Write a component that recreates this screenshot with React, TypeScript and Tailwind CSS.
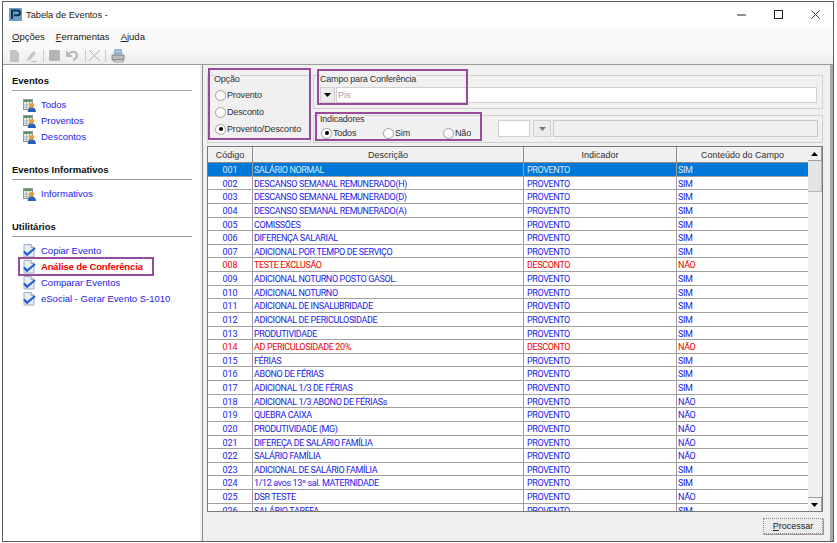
import React from "react";

const rows: [string, string, string, string][] = [
  ["001", "SALÁRIO NORMAL", "PROVENTO", "SIM"],
  ["002", "DESCANSO SEMANAL REMUNERADO(H)", "PROVENTO", "SIM"],
  ["003", "DESCANSO SEMANAL REMUNERADO(D)", "PROVENTO", "SIM"],
  ["004", "DESCANSO SEMANAL REMUNERADO(A)", "PROVENTO", "SIM"],
  ["005", "COMISSÕES", "PROVENTO", "SIM"],
  ["006", "DIFERENÇA SALARIAL", "PROVENTO", "SIM"],
  ["007", "ADICIONAL POR TEMPO DE SERVIÇO", "PROVENTO", "SIM"],
  ["008", "TESTE EXCLUSÃO", "DESCONTO", "NÃO"],
  ["009", "ADICIONAL NOTURNO POSTO GASOL.", "PROVENTO", "SIM"],
  ["010", "ADICIONAL NOTURNO", "PROVENTO", "SIM"],
  ["011", "ADICIONAL DE INSALUBRIDADE", "PROVENTO", "SIM"],
  ["012", "ADICIONAL DE PERICULOSIDADE", "PROVENTO", "SIM"],
  ["013", "PRODUTIVIDADE", "PROVENTO", "SIM"],
  ["014", "AD PERICULOSIDADE 20%", "DESCONTO", "NÃO"],
  ["015", "FÉRIAS", "PROVENTO", "SIM"],
  ["016", "ABONO DE FÉRIAS", "PROVENTO", "SIM"],
  ["017", "ADICIONAL 1/3 DE FÉRIAS", "PROVENTO", "SIM"],
  ["018", "ADICIONAL 1/3 ABONO DE FÉRIASs", "PROVENTO", "NÃO"],
  ["019", "QUEBRA CAIXA", "PROVENTO", "NÃO"],
  ["020", "PRODUTIVIDADE (MG)", "PROVENTO", "NÃO"],
  ["021", "DIFEREÇA DE SALÁRIO FAMÍLIA", "PROVENTO", "NÃO"],
  ["022", "SALÁRIO FAMÍLIA", "PROVENTO", "NÃO"],
  ["023", "ADICIONAL DE SALÁRIO FAMÍLIA", "PROVENTO", "SIM"],
  ["024", "1/12 avos 13º sal. MATERNIDADE", "PROVENTO", "SIM"],
  ["025", "DSR TESTE", "PROVENTO", "NÃO"],
  ["026", "SALÁRIO TAREFA", "PROVENTO", "SIM"],
];

function TableIcon() {
  return (
    <svg width="13" height="13" viewBox="0 0 13 13" className="shrink-0">
      <rect x="0.5" y="0.5" width="9" height="10" fill="#e8eef0" stroke="#8a9698" />
      <rect x="1" y="1" width="8" height="2" fill="#5c9a62" />
      <path d="M0 6h9M0 8.500h9M3.500 3v7M6.500 3v7" stroke="#9aa5a8" strokeWidth="0.7" />
      <circle cx="8.800" cy="6.200" r="2.300" fill="#ee9a2e" />
      <path d="M4.600 13c0-3 1.800-4.400 4.200-4.400S13 10 13 13z" fill="#2c62b8" />
    </svg>
  );
}

function CheckIcon() {
  return (
    <svg width="13" height="14" viewBox="0 0 13 14" className="shrink-0">
      <path d="M1 .5h7l3 3V13H1z" fill="#e6edf5" stroke="#9fadbd" />
      <path d="M8 .5v3h3" fill="#d5dde6" stroke="#9fadbd" />
      <path d="M1 7.500l3 3.300L12 4" fill="none" stroke="#1f5fd0" strokeWidth="2.200" />
    </svg>
  );
}

function Section({ title, children }: { title: string; children: React.ReactNode }) {
  return (
    <div>
      <div className="font-bold text-[9.5px] leading-[12px] text-[#101010] border-b border-[#a0a0a0] pb-[3px] mr-[8px]">{title}</div>
      <div className="flex flex-col pl-[11px] pt-[6px]">{children}</div>
    </div>
  );
}

function Link({ icon, label, red }: { icon: React.ReactNode; label: string; red?: boolean }) {
  return (
    <div className="h-[16px] flex items-center gap-[5px]">
      {icon}
      <span className={red ? "text-[#f00000] font-bold tracking-[-0.15px]" : "text-[#1a1aee]"}>{label}</span>
    </div>
  );
}

function Radio({ on, label, className }: { on?: boolean; label: string; className?: string }) {
  return (
    <div className={"flex items-center gap-[1px] h-[12px] text-[9px] tracking-[-0.15px] " + (className ?? "")}>
      <span className="w-[11px] h-[11px] rounded-full border border-[#a0a0a0] bg-white flex items-center justify-center shrink-0">
        {on && <span className="w-[4px] h-[4px] rounded-full bg-black" />}
      </span>
      <span className="text-[#303030]">{label}</span>
    </div>
  );
}

function GroupLabel({ text, x }: { text: string; x: string }) {
  return <span className={"absolute top-[-3px] leading-[12px] text-[9px] tracking-[-0.2px] px-[0px] bg-[#f0f0f0] text-[#303030] " + x}>{text}</span>;
}

function ArrowDown({ color = "#000" }: { color?: string }) {
  return (
    <svg width="7" height="4" viewBox="0 0 7 4">
      <path d="M0 0h7L3.500 4z" fill={color} />
    </svg>
  );
}

export default function App() {
  return (
    <div className="w-[837px] h-[543px] bg-white overflow-hidden relative text-[9.5px] leading-[12px] font-['Liberation_Sans',sans-serif]">
      <div className="ml-[2px] mt-[1px] w-[832px] h-[541px] border border-[#5a6068] flex flex-col bg-[#f0f0f0]">
        <div className="h-[25px] bg-white flex items-center shrink-0">
          <svg width="13" height="13" viewBox="0 0 13 13" className="ml-[6px] shrink-0">
            <rect width="13" height="13" fill="#6d9fc8" />
            <path d="M3 11V2.500h5.500a2.300 2.300 0 0 1 0 4.800H4.800" fill="none" stroke="#10304f" strokeWidth="2" />
          </svg>
          <span className="ml-[4px] text-[9.25px] text-[#202020]">Tabela de Eventos -</span>
          <div className="ml-auto flex items-center mr-[13px] gap-[28px]">
            <svg width="9" height="9" viewBox="0 0 9 9"><path d="M0 5h9" stroke="#222" /></svg>
            <svg width="9" height="9" viewBox="0 0 9 9"><rect x="0.500" y="0.500" width="8" height="8" fill="none" stroke="#222" /></svg>
            <svg width="9" height="9" viewBox="0 0 9 9"><path d="M0.500 0.500l8 8M8.500 0.500l-8 8" stroke="#333" /></svg>
          </div>
        </div>
        <div className="h-[20px] bg-[#f9f9f9] flex items-center pl-[9px] gap-[11px] text-[#202020] shrink-0">
          <span><u>O</u>pções</span>
          <span><u>F</u>erramentas</span>
          <span><u>A</u>juda</span>
        </div>
        <div className="h-[18px] flex items-center pl-[7px] shrink-0 border-b border-[#9a9a9a] bg-gradient-to-b from-[#fafafa] to-[#ececec]">
          <svg width="9" height="12" viewBox="0 0 9 12"><path d="M0 0h6l3 3v9H0z" fill="#c4c4c4" /></svg>
          <svg width="12" height="13" viewBox="0 0 12 13" className="ml-[7px]"><path d="M1 12c0-3 2-5 6.500-10l2.500 2c-3 4-5 7-9 8z" fill="#c6c6c6" /><path d="M5 12.500h6" stroke="#c0c0c0" /></svg>
          <span className="w-px h-[12px] bg-[#c8c8c8] ml-[5px]" />
          <svg width="11" height="11" viewBox="0 0 11 11" className="ml-[5px]"><rect width="11" height="11" rx="1.500" fill="#b4b4b4" /></svg>
          <svg width="13" height="11" viewBox="0 0 13 11" className="ml-[6px]"><path d="M1 1v5h5M2 5c3-5 9-4 9 1 0 2-2 3-4 4" fill="none" stroke="#b8b8b8" strokeWidth="2" /></svg>
          <span className="w-px h-[12px] bg-[#c8c8c8] ml-[6px]" />
          <svg width="13" height="13" viewBox="0 0 13 13" className="ml-[2px]"><path d="M1 1l11 11M12 1L1 12" stroke="#adadad" /></svg>
          <span className="w-px h-[12px] bg-[#c8c8c8] ml-[4px]" />
          <svg width="14" height="14" viewBox="0 0 14 14" className="ml-[5px]">
            <path d="M4 0h6l1 5H3z" fill="#9cc0e2" stroke="#6f8fae" strokeWidth="0.600" />
            <path d="M1 6h12v5H1z" fill="#b9bdc2" stroke="#666" strokeWidth="0.700" />
            <path d="M3 11h9v2H3z" fill="#f0f0f0" stroke="#666" strokeWidth="0.600" />
          </svg>
        </div>
        <div className="flex-1 flex min-h-0">
          <aside className="w-[197px] shrink-0 bg-white pl-[9px] pt-[10px] flex flex-col gap-[19px]">
            <Section title="Eventos">
              <Link icon={<TableIcon />} label="Todos" />
              <Link icon={<TableIcon />} label="Proventos" />
              <Link icon={<TableIcon />} label="Descontos" />
            </Section>
            <Section title="Eventos Informativos">
              <Link icon={<TableIcon />} label="Informativos" />
            </Section>
            <Section title="Utilitários">
              <Link icon={<CheckIcon />} label="Copiar Evento" />
              <Link icon={<CheckIcon />} label="Análise de Conferência" red />
              <Link icon={<CheckIcon />} label="Comparar Eventos" />
              <Link icon={<CheckIcon />} label="eSocial - Gerar Evento S-1010" />
            </Section>
          </aside>
          <main className="flex-1 min-w-0 ml-[2px] border-l border-[#8c8c8c] border-r-[3px] border-r-[#a8a8a8] pl-[4px] pr-[7px] pt-[10px] flex flex-col">
            <div className="flex gap-[2px] h-[68px] shrink-0">
              <div className="relative w-[104px] border border-[#d0d0d0] pl-[7px] pt-[13px] flex flex-col gap-[5px]">
                <GroupLabel text="Opção" x="left-[6px]" />
                <Radio label="Provento" />
                <Radio label="Desconto" />
                <Radio on label="Provento/Desconto" />
              </div>
              <div className="flex-1 flex flex-col gap-[6px]">
                <div className="relative h-[34px] border border-[#d0d0d0] pl-[6px] pr-[5px] pt-[11px] flex gap-[1px]">
                  <GroupLabel text="Campo para Conferência" x="left-[6px]" />
                  <div className="w-[15px] h-[16px] bg-[#ececec] border border-[#d0d0d0] flex items-center justify-center"><ArrowDown /></div>
                  <div className="flex-1 h-[16px] bg-white border border-[#d0d0d0] pl-[1px] text-[#a0a0b0] text-[9px] leading-[14px]">Pis</div>
                </div>
                <div className="relative h-[28px] border border-[#d0d0d0] pl-[7px] pr-[4px] flex items-start">
                  <GroupLabel text="Indicadores" x="left-[6px]" />
                  <Radio on label="Todos" className="mt-[11px] w-[62px]" />
                  <Radio label="Sim" className="mt-[11px] w-[60px]" />
                  <Radio label="Não" className="mt-[11px] w-[55px]" />
                  <div className="w-[32px] h-[17px] mt-[4px] bg-white border border-[#d0d0d0]" />
                  <div className="ml-[3px] w-[18px] h-[17px] mt-[4px] bg-[#ececec] border border-[#d0d0d0] flex items-center justify-center"><ArrowDown color="#777" /></div>
                  <div className="ml-[2px] flex-1 h-[17px] mt-[4px] border border-[#c8c8c8]" />
                </div>
              </div>
            </div>
            <div className="mt-[3px] h-[366px] shrink-0 border border-[#7a7a7a] flex overflow-hidden bg-white">
              <div className="flex-1 min-w-0 overflow-hidden">
                <div className="h-[16px] grid grid-cols-[45px_271px_153px_1fr] bg-[#f0f0f0] border-b border-[#8c8c8c] text-center text-[9px] text-[#303030] leading-[16px]">
                  <div className="border-r border-[#8c8c8c]">Código</div>
                  <div className="border-r border-[#8c8c8c]">Descrição</div>
                  <div className="border-r border-[#8c8c8c]">Indicador</div>
                  <div>Conteúdo do Campo</div>
                </div>
                {rows.map((r, i) => {
                  const sel = i === 0;
                  const red = r[2] === "DESCONTO";
                  const color = sel ? "text-[#d8e8ff] bg-[#0078d7]" : red ? "text-[#f00000]" : "text-[#1a1aee]";
                  return (
                    <div key={r[0]} className={"h-[13.625px] grid grid-cols-[45px_271px_153px_1fr] border-b border-[#a0a0a0] leading-[14px] text-[9px] tracking-[-0.37px] font-['Roboto',sans-serif] " + color}>
                      <div className="text-center border-r border-[#a0a0a0] tracking-normal">{r[0]}</div>
                      <div className="pl-[1px] border-r border-[#a0a0a0] whitespace-nowrap">{r[1]}</div>
                      <div className="pl-[3px] border-r border-[#a0a0a0]">{r[2]}</div>
                      <div className="pl-[1px]">{r[3]}</div>
                    </div>
                  );
                })}
              </div>
              <div className="w-[14px] shrink-0 bg-[#f0f0f0] flex flex-col">
                <div className="h-[14px] flex items-center justify-center bg-[#f0f0f0] border-b border-r border-[#a0a0a0]"><svg width="7" height="4" viewBox="0 0 7 4"><path d="M3.500 0L7 4H0z" /></svg></div>
                <div className="h-[31px] bg-[#e4e4e4] border-b border-r border-[#b8b8b8]" />
                <div className="flex-1" />
                <div className="h-[14px] flex items-center justify-center border-t border-r border-[#a0a0a0]"><ArrowDown /></div>
              </div>
            </div>
            <div className="flex justify-end mt-[6px]">
              <div className="w-[60px] h-[16px] border border-[#8c8c8c] border-dotted bg-[#ececec] text-center text-[9px] leading-[14px] text-[#202020] shadow-[1px_1px_0_#999]"><u>P</u>rocessar</div>
            </div>
          </main>
        </div>
      </div>
      <div className="absolute left-[208px] top-[68px] w-[103px] h-[72px] border-2 border-[#974b9b]" />
      <div className="absolute left-[317px] top-[69px] w-[151px] h-[36px] border-2 border-[#974b9b]" />
      <div className="absolute left-[315px] top-[112px] w-[167px] h-[29px] border-2 border-[#974b9b]" />
      <div className="absolute left-[18px] top-[257px] w-[136px] h-[19px] border-2 border-[#974b9b]" />
    </div>
  );
}
